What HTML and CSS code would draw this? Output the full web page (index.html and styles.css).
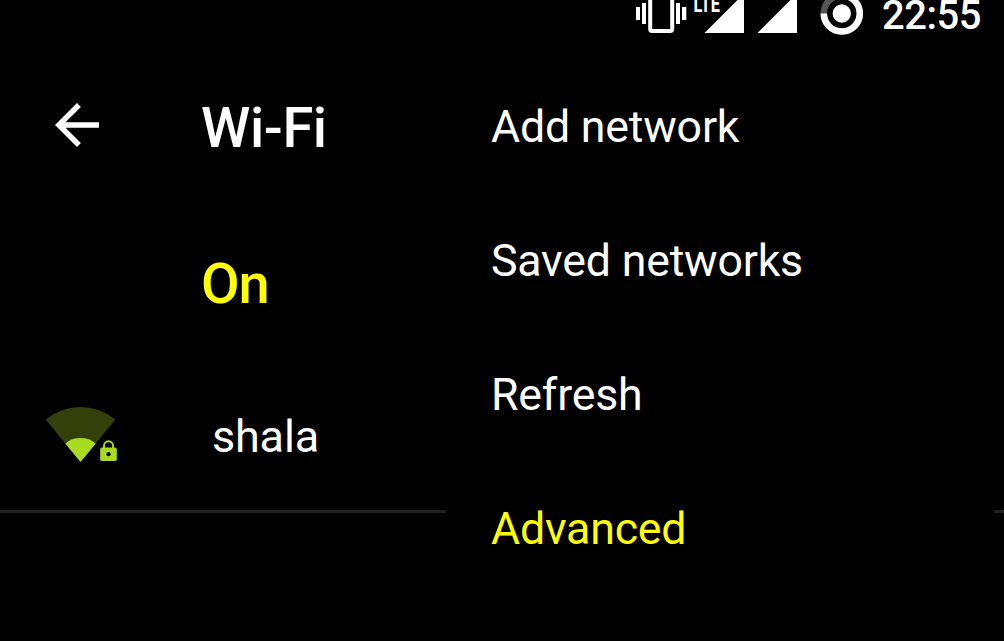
FILE: index.html
```html
<!DOCTYPE html>
<html lang="en">
<head>
    <meta charset="UTF-8">
    <meta name="viewport" content="width=device-width, initial-scale=1.0">
    <title>Wi-Fi</title>
    <link rel="stylesheet" href="styles.css">
</head>
<body>
    <div class="screen">
        <div class="status-bar">
            <svg class="vibrate" width="52" height="40" viewBox="636 0 52 40">
                <path d="M636 7h4v13h-4zM642 3h4v21h-4zM676 3h4v21h-4zM682 7h4.300v13h-4.300z" fill="#fff"/>
                <rect x="650.200" y="-10" width="22" height="41" rx="2" fill="none" stroke="#fff" stroke-width="4"/>
            </svg>
            <svg class="signals" width="106" height="40" viewBox="692 0 106 40">
                <text class="lte" x="693.500" y="11.500" textLength="26.500" lengthAdjust="spacingAndGlyphs">LTE</text>
                <path d="M704.500 33L737.500 0H744v33zM757.500 33L790.500 0H797v33z" fill="#fff"/>
            </svg>
            <svg class="battery" width="44" height="40" viewBox="820 0 44 40">
                <circle cx="841.800" cy="13.500" r="18" fill="none" stroke="#555" stroke-width="6.500"/>
                <path d="M841.800 -4.500a18 18 0 1 1 -18 18" fill="none" stroke="#fff" stroke-width="6.500"/>
                <circle cx="841.800" cy="13.500" r="9.200" fill="#fff"/>
            </svg>
            <span class="clock">22:55</span>
        </div>

        <header class="toolbar">
            <svg class="back" width="66" height="66" viewBox="0 0 24 24">
                <path d="M20 11H7.830l5.590-5.590L12 4l-8 8 8 8 1.410-1.410L7.830 13H20z" fill="#fff"/>
            </svg>
            <h1>Wi-Fi</h1>
        </header>

        <div class="switch-row">On</div>

        <div class="network">
            <svg class="signal" width="76" height="60" viewBox="44 405 76 60">
                <path d="M80.500 462L45.700 419.500a55 55 0 0 1 69.600 0z" fill="#33400a"/>
                <path d="M80.500 462L65.300 443.400a24 24 0 0 1 30.400 0z" fill="#a8dc20"/>
                <path d="M104 448v-2.200a4.500 4.500 0 0 1 9 0v2.200" fill="none" stroke="#a8dc20" stroke-width="1.900"/>
                <rect x="100.200" y="447.500" width="16.600" height="13.500" rx="1.800" fill="#a8dc20"/>
                <circle cx="108.500" cy="454.200" r="2.100" fill="#000"/>
            </svg>
            <span>shala</span>
        </div>

        <!-- Overflow menu -->
        <ul class="menu">
            <li>Add network</li>
            <li>Saved networks</li>
            <li>Refresh</li>
            <li class="active">Advanced</li>
        </ul>
    </div>
</body>
</html>
```
FILE: styles.css
```css
body {
    margin: 0;
    background-color: #000;
    color: #fff;
    font-family: Roboto, sans-serif;
}
.screen {
    position: relative;
    height: 641px;
    overflow: hidden;
}
.status-bar {
    display: flex;
    justify-content: flex-end;
    height: 40px;
}
.signals {
    margin-left: 4px;
}
.lte {
    fill: #fff;
    font-size: 23px;
    font-weight: 700;
}
.battery {
    margin-left: 22px;
}
.clock {
    width: 122px;
    margin-left: 18px;
    font-size: 40px;
    font-weight: 500;
    letter-spacing: -0.5px;
    line-height: 31px;
}
.toolbar {
    display: flex;
    align-items: center;
    height: 176px;
    padding-left: 44px;
}
.back {
    margin-bottom: 6px;
}
h1 {
    margin: 0 0 0 91px;
    font-size: 56px;
    font-weight: 500;
    letter-spacing: -0.4px;
}
.switch-row {
    height: 136px;
    padding-left: 201px;
    color: #ff0;
    font-size: 56px;
    font-weight: 500;
    letter-spacing: -1px;
    line-height: 136px;
}
.network {
    display: flex;
    align-items: center;
    box-sizing: border-box;
    height: 161px;
    padding: 12px 0 0 44px;
    border-bottom: 3px solid #202020;
    font-size: 45px;
}
.network span {
    margin-bottom: 2px;
    letter-spacing: -0.2px;
}
.signal {
    margin: 0 92px 4px 0;
}
.menu {
    position: absolute;
    top: 60px;
    left: 446px;
    width: 548px;
    margin: 0;
    padding: 0;
    background-color: #000;
    list-style: none;
    font-size: 44.7px;
    letter-spacing: -0.2px;
}
.menu li {
    height: 134px;
    padding-left: 45px;
    line-height: 134px;
}
.menu .active {
    color: #ff0;
}
```
